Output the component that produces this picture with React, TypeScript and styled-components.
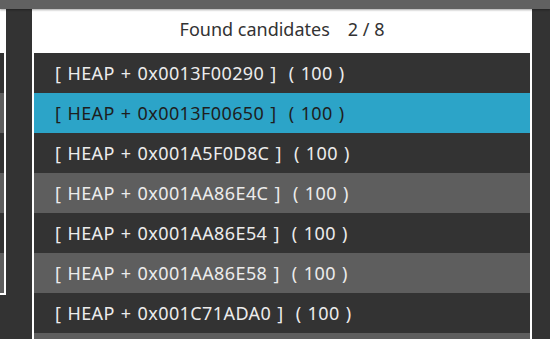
import styled, { createGlobalStyle } from "styled-components";

const GlobalStyle = createGlobalStyle`
  html, body {
    margin: 0;
    padding: 0;
    background: #333333;
    overflow: hidden;
  }
  body {
    font-family: "Noto Sans", "Noto Sans CJK JP", sans-serif;
  }
`;

const candidates = [
  "0x0013F00290",
  "0x0013F00650",
  "0x001A5F0D8C",
  "0x001AA86E4C",
  "0x001AA86E54",
  "0x001AA86E58",
  "0x001C71ADA0",
  "0x001C71ADB8",
];

const selected = 1;

const rowTone = (i: number) => {
  if (i === selected) return "selected";
  return i % 2 === 0 ? "dark" : "light";
};

export default function App() {
  return (
    <>
      <GlobalStyle />
      <Page>
        <TopBar />
        <Body>
          <SidePanel>
            <SideHeader />
            {[0, 1, 2, 3, 4, 5].map((i) => (
              <SideRow key={i} $light={i % 2 === 1} />
            ))}
          </SidePanel>
          <Gutter />
          <Popup>
            <PopupHeader>
              <span>Found candidates</span>
              <span>2 / 8</span>
            </PopupHeader>
            <List>
              {candidates.map((addr, i) => (
                <Row key={addr} $tone={rowTone(i)}>
                  [ HEAP + {addr} ]&nbsp;&nbsp;( 100 )
                </Row>
              ))}
            </List>
          </Popup>
        </Body>
      </Page>
    </>
  );
}

const Page = styled.div`
  width: 550px;
  height: 339px;
  display: flex;
  flex-direction: column;
  background: #333333;
  overflow: hidden;
`;

const TopBar = styled.div`
  height: 9px;
  flex-shrink: 0;
  background: #616161;
  box-shadow: 0 1px 2px rgba(0, 0, 0, 0.35);
  position: relative;
  z-index: 2;
`;

const Body = styled.div`
  flex: 1;
  display: flex;
  align-items: flex-start;
  min-height: 0;
`;

const SidePanel = styled.div`
  width: 4px;
  flex-shrink: 0;
  border-right: 2px solid #ffffff;
  border-bottom: 2px solid #ffffff;
  display: flex;
  flex-direction: column;
`;

const SideHeader = styled.div`
  height: 44px;
  background: #ffffff;
`;

const SideRow = styled.div<{ $light: boolean }>`
  height: 40px;
  background: ${(p) => (p.$light ? "#5e5e5e" : "#333333")};
`;

const Gutter = styled.div`
  width: 26px;
  flex-shrink: 0;
`;

const Popup = styled.div`
  width: 496px;
  flex-shrink: 0;
  background: #ffffff;
  padding: 0 2px;
  display: flex;
  flex-direction: column;
`;

const PopupHeader = styled.div`
  height: 40px;
  padding-bottom: 4px;
  display: flex;
  justify-content: center;
  align-items: center;
  gap: 18px;
  font-size: 18px;
  color: #333333;
`;

const List = styled.div`
  display: flex;
  flex-direction: column;
`;

const toneBg: Record<string, string> = {
  dark: "#333333",
  light: "#5e5e5e",
  selected: "#2ca4c8",
};

const Row = styled.div<{ $tone: string }>`
  height: 40px;
  line-height: 40px;
  padding-left: 21px;
  font-size: 18px;
  letter-spacing: 0.4px;
  word-spacing: 1px;
  white-space: pre;
  background: ${(p) => toneBg[p.$tone]};
  color: ${(p) => (p.$tone === "selected" ? "#1e1e1e" : "#ececec")};
`;
